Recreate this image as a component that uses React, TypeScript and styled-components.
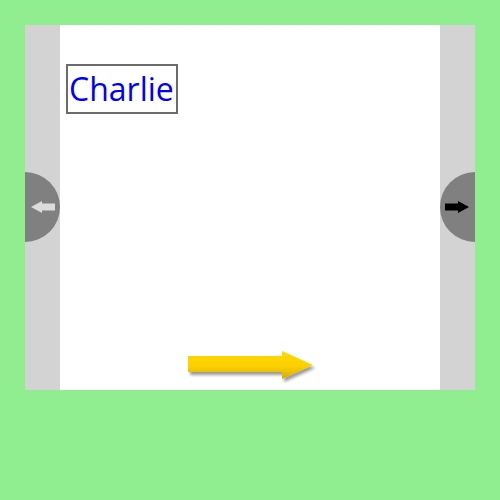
import React from "react";
import styled, { createGlobalStyle } from "styled-components";

const Global = createGlobalStyle`
  html, body { margin: 0; padding: 0; background: #90ee90; }
  body { font-family: "Open Sans", "Noto Sans", sans-serif; }
`;

const Page = styled.div`
  width: 500px;
  height: 500px;
  padding: 25px;
  box-sizing: border-box;
`;

const Carousel = styled.div`
  position: relative;
  width: 450px;
  height: 365px;
  display: grid;
  grid-template-columns: 35px 1fr 35px;
  overflow: hidden;
`;

const Gutter = styled.div`
  background: #d3d3d3;
`;

const Slide = styled.div`
  background: #ffffff;
  position: relative;
  display: flex;
  flex-direction: column;
  justify-content: space-between;
  align-items: flex-start;
  padding: 39px 0 4px 6px;
`;

const NameBox = styled.div`
  border: 2px solid #6b6b6b;
  padding: 0 2px 0 1px;
  height: 46px;
  display: flex;
  align-items: center;
  color: #0000ff;
  font-family: "Open Sans", "Noto Sans", sans-serif;
  font-size: 32px;
  line-height: 46px;
`;

const BigArrow = styled.svg`
  align-self: flex-start;
  margin-left: 121px;
  display: block;
`;

const NavButton = styled.button<{ $side: "left" | "right" }>`
  position: absolute;
  top: 147px;
  ${(p) => (p.$side === "left" ? "left: -35px;" : "right: -35px;")}
  width: 70px;
  height: 70px;
  border-radius: 50%;
  border: none;
  padding: 0;
  background: #808080;
  display: flex;
  align-items: center;
  justify-content: ${(p) => (p.$side === "left" ? "flex-end" : "flex-start")};
  padding-${(p) => (p.$side === "left" ? "right" : "left")}: 5px;
  cursor: pointer;
`;

const SmallArrow = ({ dir, color }: { dir: "left" | "right"; color: string }) => (
  <svg width="24" height="12" viewBox="0 0 24 12" style={{ display: "block" }}>
    <path
      d="M0 2.5 H13 V0 L24 6 L13 12 V9.5 H0 Z"
      fill={color}
      transform={dir === "left" ? "translate(24 0) scale(-1 1)" : undefined}
    />
  </svg>
);

export default function App() {
  return (
    <>
      <Global />
      <Page>
        <Carousel>
          <Gutter />
          <Slide>
            <NameBox>Charlie</NameBox>
            <BigArrow width="134" height="36" viewBox="0 0 134 36">
              <defs>
                <linearGradient id="gold" x1="0" y1="0" x2="0" y2="1">
                  <stop offset="0" stopColor="#ffd700" />
                  <stop offset="0.55" stopColor="#fcd000" />
                  <stop offset="1" stopColor="#d9a800" />
                </linearGradient>
                <filter id="sh" x="-10%" y="-30%" width="130%" height="180%">
                  <feDropShadow dx="2" dy="3" stdDeviation="1.5" floodColor="#000" floodOpacity="0.4" />
                </filter>
              </defs>
              <path
                d="M1 6 H95 V1 L126 15 L95 29 V22 H1 Z"
                fill="url(#gold)"
                filter="url(#sh)"
              />
            </BigArrow>
          </Slide>
          <Gutter />
          <NavButton $side="left" aria-label="previous">
            <SmallArrow dir="left" color="#dcdcdc" />
          </NavButton>
          <NavButton $side="right" aria-label="next">
            <SmallArrow dir="right" color="#000000" />
          </NavButton>
        </Carousel>
      </Page>
    </>
  );
}
